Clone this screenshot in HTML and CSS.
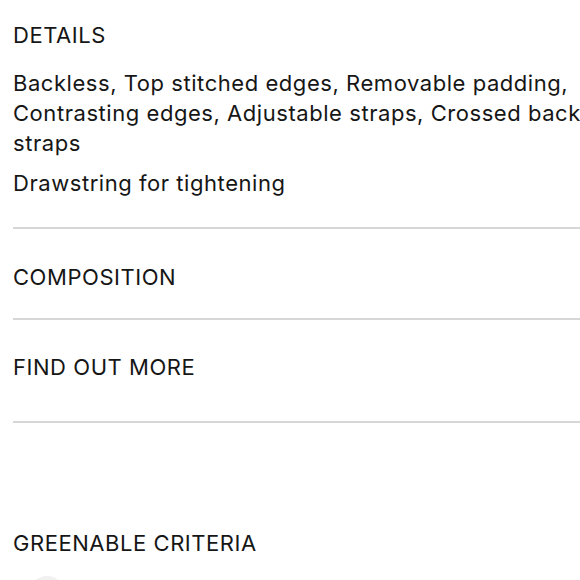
FILE: index.html
```html
<!DOCTYPE html>
<html lang="en">
<head>
<meta charset="utf-8">
<link rel="stylesheet" href="styles.css">
</head>
<body>
<div class="page">
  <section class="block details">
    <h2 class="title">DETAILS</h2>
    <p class="text first">Backless, Top stitched edges, Removable padding, Contrasting edges, Adjustable straps, Crossed back straps</p>
    <p class="text second">Drawstring for tightening</p>
  </section>
  <hr class="rule">
  <section class="block composition">
    <h2 class="title">COMPOSITION</h2>
  </section>
  <hr class="rule">
  <section class="block more">
    <h2 class="title">FIND OUT MORE</h2>
  </section>
  <hr class="rule">
  <section class="block criteria">
    <h2 class="title">GREENABLE CRITERIA</h2>
    <div class="badge"></div>
  </section>
</div>
</body>
</html>
```
FILE: styles.css
```css
html, body {
  margin: 0;
  padding: 0;
  background: #ffffff;
}
body {
  font-family: Inter, "Noto Sans", sans-serif;
  color: #161616;
}
.page {
  padding-left: 13px;
  width: 570px;
  height: 580px;
  overflow: hidden;
}
.title {
  margin: 0;
  font-size: 22px;
  font-weight: 400;
  line-height: 30px;
  letter-spacing: 0.55px;
}
.text {
  margin: 0;
  font-size: 22px;
  line-height: 30px;
  letter-spacing: 0.55px;
}
.details {
  padding-top: 20px;
  padding-bottom: 29px;
}
.details .first {
  margin-top: 18px;
}
.details .second {
  margin-top: 10px;
}
.rule {
  margin: 0;
  border: 0;
  height: 2px;
  background: #d6d6d6;
  width: 580px;
}
.composition {
  padding-top: 33px;
  padding-bottom: 26px;
}
.more {
  padding-top: 32px;
  padding-bottom: 39px;
}
.criteria {
  padding-top: 105px;
}
.badge {
  margin-top: 18px;
  margin-left: 15px;
  width: 38px;
  height: 38px;
  border-radius: 50%;
  background: #f1f1f1;
}
```
